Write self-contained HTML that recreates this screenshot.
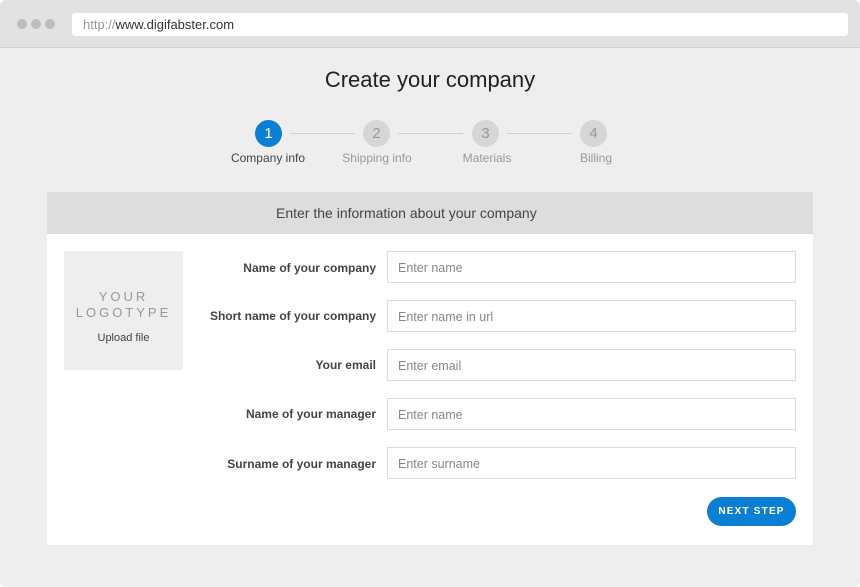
<!DOCTYPE html>
<html><head><style>
*{margin:0;padding:0;box-sizing:border-box}
body{width:860px;height:587px;background:#fff;font-family:"Liberation Sans",sans-serif;position:relative;overflow:hidden}
.win{position:absolute;left:0;top:0;width:860px;height:587px;background:#eeeeee;border-radius:6px;overflow:hidden}
.bar{position:absolute;left:0;top:0;width:860px;height:48px;background:#e2e2e2;border-bottom:1px solid #d2d2d2}
.dot{position:absolute;top:19px;width:10px;height:10px;border-radius:50%;background:#bdbdbd}
.url{position:absolute;left:72px;top:13px;width:776px;height:23px;background:#fff;border-radius:3px;font-size:13px;color:#333;padding:4px 0 0 11px}
.url span{color:#999}
h1{position:absolute;left:0;width:860px;top:67px;text-align:center;font-weight:normal;font-size:22px;color:#222}
.c{position:absolute;top:120px;width:27px;height:27px;border-radius:50%;background:#d6d6d6;color:#999;font-size:15px;text-align:center;line-height:27px}
.ln{position:absolute;top:133px;height:1px;background:#cfcfcf}
.sl{position:absolute;top:151px;font-size:12px;color:#999;text-align:center;width:120px}
.panel{position:absolute;left:47px;top:192px;width:766px;height:353px;background:#fff}
.ph{height:42px;background:#dddddd;padding-left:229px;font-size:14px;color:#444;line-height:42px}
.logo{position:absolute;left:17px;top:59px;width:119px;height:119px;background:#eeeeee;text-align:center}
.lab{position:absolute;right:437px;font-size:12px;font-weight:bold;color:#444;text-align:right;white-space:nowrap}
.inp{position:absolute;left:340px;width:409px;height:32px;border:1px solid #dcdcdc;font-size:12.5px;color:#888;padding:9px 0 0 10px}
.btn{position:absolute;left:660px;top:305px;width:89px;height:29px;border-radius:15px;background:#0a7fd3;color:#fff;font-size:10px;font-weight:bold;letter-spacing:1.2px;text-align:center;line-height:29px}
</style></head><body>
<div class="win">
<div class="bar">
<div class="dot" style="left:17px"></div><div class="dot" style="left:31px"></div><div class="dot" style="left:45px"></div>
<div class="url"><span>http://</span>www.digifabster.com</div>
</div>
<h1>Create your company</h1>
<div class="ln" style="left:290px;width:65px"></div>
<div class="ln" style="left:398px;width:65px"></div>
<div class="ln" style="left:507px;width:65px"></div>
<div class="c" style="left:255px;background:#0a7fd3;color:#fff">1</div>
<div class="c" style="left:363px">2</div>
<div class="c" style="left:472px">3</div>
<div class="c" style="left:580px">4</div>
<div class="sl" style="left:208px;color:#444">Company info</div>
<div class="sl" style="left:317px">Shipping info</div>
<div class="sl" style="left:427px">Materials</div>
<div class="sl" style="left:536px">Billing</div>
<div class="panel">
<div class="ph">Enter the information about your company</div>
<div class="logo">
<div style="margin-top:38px;font-size:13px;letter-spacing:3px;color:#999;line-height:16px">YOUR<br>LOGOTYPE</div>
<div style="margin-top:11px;font-size:11px;color:#444">Upload file</div>
</div>
<div class="lab" style="top:69px">Name of your company</div>
<div class="lab" style="top:117px">Short name of your company</div>
<div class="lab" style="top:166px">Your email</div>
<div class="lab" style="top:215px">Name of your manager</div>
<div class="lab" style="top:265px">Surname of your manager</div>
<div class="inp" style="top:59px">Enter name</div>
<div class="inp" style="top:108px">Enter name in url</div>
<div class="inp" style="top:157px">Enter email</div>
<div class="inp" style="top:206px">Enter name</div>
<div class="inp" style="top:255px">Enter surname</div>
<div class="btn">NEXT STEP</div>
</div>
</div>
</body></html>
